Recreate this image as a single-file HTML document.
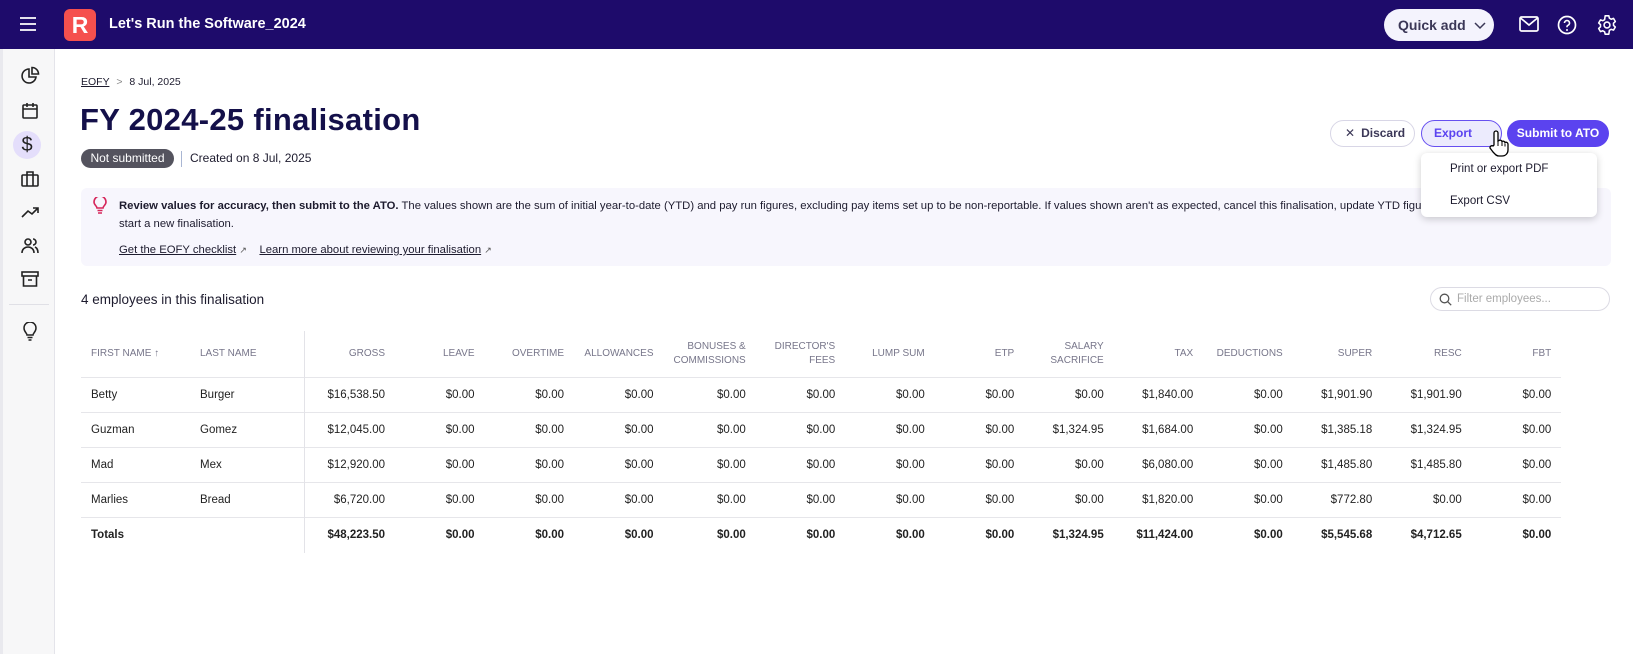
<!DOCTYPE html>
<html><head><meta charset="utf-8"><style>
*{box-sizing:border-box;margin:0;padding:0}
body{width:1633px;height:654px;overflow:hidden;background:#fff;font-family:"Liberation Sans",sans-serif;color:#1d1b2e;position:relative}
.top{position:absolute;left:0;top:0;width:1633px;height:49px;background:#1e0b6b}
.side{position:absolute;left:0;top:49px;width:55px;height:605px;background:#f7f7f8;border-right:1px solid #e4e4ea;border-left:3px solid #e9e9ee}
.abs{position:absolute}
.si{position:absolute;left:17px;width:20px;height:20px}
table{border-collapse:collapse;position:absolute;left:81px;top:331px;table-layout:fixed;font-size:11.5px}
td,th{padding:0 10px;text-align:right;white-space:nowrap}
th{font-weight:normal;color:#77768a;font-size:10px;height:46px;line-height:14px;text-transform:uppercase}
td{height:35px;border-top:1px solid #e6e6ea;color:#222}
tr.tot td{font-weight:bold;height:36px}
.l{text-align:left}
.div{border-right:1px solid #e3e3e8}
</style></head><body>
<div class="top">
 <svg class="abs" style="left:19px;top:16px" width="18" height="16"><path d="M1 2h16M1 8h16M1 14h16" stroke="#fff" stroke-width="1.8"/></svg>
 <div class="abs" style="left:64px;top:9px;width:32px;height:32px;background:#f5504e;border-radius:6px;color:#fff;font-size:23px;font-weight:bold;text-align:center;line-height:32px">R</div>
 <div class="abs" style="left:109px;top:16px;color:#fff;font-size:14.5px;font-weight:bold">Let's Run the Software_2024</div>
 <div class="abs" style="left:1384px;top:9px;width:110px;height:32px;background:#f4f3fd;border-radius:16px;font-size:14px;font-weight:bold;color:#3b3757;line-height:32px;padding-left:14px">Quick add <svg width="12" height="8" style="margin-left:4px"><path d="M1 1l5 5 5-5" stroke="#3b3757" stroke-width="1.5" fill="none"/></svg></div>
 <svg class="abs" style="left:1519px;top:16px" width="20" height="16"><rect x="1" y="1" width="18" height="14" rx="1.5" stroke="#fff" stroke-width="1.7" fill="none"/><path d="M1.5 2l8.5 7 8.5-7" stroke="#fff" stroke-width="1.7" fill="none"/></svg>
 <svg class="abs" style="left:1557px;top:15px" width="20" height="20"><circle cx="10" cy="10" r="8.5" stroke="#fff" stroke-width="1.7" fill="none"/><path d="M7.5 8a2.5 2.5 0 1 1 3.5 2.3c-.7.3-1 .8-1 1.5v.5" stroke="#fff" stroke-width="1.6" fill="none"/><circle cx="10" cy="15" r="1" fill="#fff"/></svg>
 <svg class="abs" style="left:1596px;top:14px" width="22" height="22" viewBox="0 0 24 24"><path d="M10 2h4l.6 2.6 2 1.1 2.5-.9 2 3.4-2 1.8v2.4l2 1.8-2 3.4-2.5-.9-2 1.1L14 22h-4l-.6-2.6-2-1.1-2.5.9-2-3.4 2-1.8V11.6l-2-1.8 2-3.4 2.5.9 2-1.1z" stroke="#fff" stroke-width="1.7" fill="none" stroke-linejoin="round"/><circle cx="12" cy="12" r="3.2" stroke="#fff" stroke-width="1.7" fill="none"/></svg>
</div>
<div class="side">
 <svg class="si" style="top:17px" viewBox="0 0 20 20"><path d="M9 3a7 7 0 1 0 7 8H9z" stroke="#222" stroke-width="1.6" fill="none"/><path d="M12 1.5a6.5 6.5 0 0 1 6.5 6.5H12z" stroke="#222" stroke-width="1.6" fill="none"/></svg>
 <svg class="si" style="top:52px" viewBox="0 0 20 20"><rect x="3" y="4" width="14" height="13" rx="1" stroke="#222" stroke-width="1.6" fill="none"/><path d="M3 8h14M7 2v4M13 2v4" stroke="#222" stroke-width="1.6"/></svg>
 <div class="abs" style="left:10px;top:82px;width:28px;height:28px;border-radius:14px;background:#e4defb;text-align:center;line-height:28px;font-size:20px;color:#222">$</div>
 <svg class="si" style="top:120px" viewBox="0 0 20 20"><rect x="2" y="6" width="16" height="11" rx="1" stroke="#222" stroke-width="1.6" fill="none"/><path d="M7 6V3h6v3M7 6v11M13 6v11" stroke="#222" stroke-width="1.6" fill="none"/></svg>
 <svg class="si" style="top:153px" viewBox="0 0 20 20"><path d="M2 15l6-6 4 3 6-6M13 6h5v5" stroke="#222" stroke-width="1.6" fill="none"/></svg>
 <svg class="si" style="top:187px" viewBox="0 0 20 20"><circle cx="8" cy="6" r="3" stroke="#222" stroke-width="1.6" fill="none"/><path d="M2 17c0-4 3-6 6-6s6 2 6 6M13 3a3 3 0 0 1 0 6M15 11c2 1 3 3 3 6" stroke="#222" stroke-width="1.6" fill="none"/></svg>
 <svg class="si" style="top:220px" viewBox="0 0 20 20"><rect x="2" y="3" width="16" height="4" stroke="#222" stroke-width="1.6" fill="none"/><path d="M3.5 7v10h13V7M8 11h4" stroke="#222" stroke-width="1.6" fill="none"/></svg>
 <div class="abs" style="left:6px;top:255px;width:40px;height:1px;background:#e0e0e6"></div>
 <svg class="si" style="top:273px" viewBox="0 0 20 20"><path d="M7 13c0-2-3-3-3-7a6 6 0 0 1 12 0c0 4-3 5-3 7zM7.5 15.5h5M8.5 18h3" stroke="#222" stroke-width="1.5" fill="none"/></svg>
</div>
<div class="abs" style="left:81px;top:76px;font-size:10.5px"><span style="text-decoration:underline">EOFY</span> <span style="color:#888;margin:0 4px">&gt;</span> 8 Jul, 2025</div>
<div class="abs" style="left:80px;top:102px;font-size:31px;font-weight:900;color:#14104a;letter-spacing:0.3px">FY 2024-25 finalisation</div>
<div class="abs" style="left:81px;top:149px;width:93px;height:19px;border-radius:10px;background:#54535e;color:#fff;font-size:12px;text-align:center;line-height:19px">Not submitted</div>
<div class="abs" style="left:181px;top:151px;width:1px;height:16px;background:#a9b6d3"></div>
<div class="abs" style="left:190px;top:151px;font-size:12px">Created on 8 Jul, 2025</div>
<div class="abs" style="left:1330px;top:120px;width:85px;height:27px;border:1px solid #d8d6e6;border-radius:14px;font-size:12px;font-weight:bold;color:#3b3757;line-height:25px;padding-left:14px"><span style="font-weight:normal;margin-right:6px">✕</span>Discard</div>
<div class="abs" style="left:1421px;top:120px;width:81px;height:27px;border:1px solid #6750f0;background:#ecebfd;border-radius:14px;font-size:12px;font-weight:bold;color:#5b43f0;line-height:25px;padding-left:12px">Export</div>
<div class="abs" style="left:1507px;top:120px;width:102px;height:27px;background:#5b43ef;border-radius:14px;font-size:12px;font-weight:bold;color:#fff;line-height:27px;text-align:center">Submit to ATO</div>
<div class="abs" style="left:81px;top:188px;width:1530px;height:78px;background:#f7f6fd;border-radius:6px"></div>
<svg class="abs" style="left:93px;top:197px" width="14" height="18" viewBox="0 0 14 18"><path d="M4 11c0-2-3-3-3-6a6 6 0 0 1 12 0c0 3-3 4-3 6zM4.5 13.5h5M5 16h4" stroke="#d6265b" stroke-width="1.6" fill="none"/></svg>
<div class="abs" style="left:119px;top:197px;font-size:11.3px;line-height:18px;white-space:nowrap"><b style="font-weight:600">Review values for accuracy, then submit to the ATO.</b> The values shown are the sum of initial year-to-date (YTD) and pay run figures, excluding pay items set up to be non-reportable. If values shown aren't as expected, cancel this finalisation, update YTD figures and<br>start a new finalisation.</div>
<div class="abs" style="left:119px;top:244px;font-size:11.3px;white-space:nowrap"><span style="text-decoration:underline">Get the EOFY checklist</span> <span style="font-size:9px;color:#555">↗</span>&nbsp;&nbsp;&nbsp; <span style="text-decoration:underline">Learn more about reviewing your finalisation</span> <span style="font-size:9px;color:#555">↗</span></div>
<div class="abs" style="left:1421px;top:153px;width:176px;height:64px;background:#fff;border-radius:6px;box-shadow:0 2px 8px rgba(0,0,0,.2);font-size:11.5px">
 <div class="abs" style="left:29px;top:10px">Print or export PDF</div>
 <div class="abs" style="left:29px;top:42px">Export CSV</div>
</div>
<svg class="abs" style="left:1488px;top:129px" width="22" height="28" viewBox="0 0 22 28"><path d="M6 16V4a2 2 0 0 1 4 0v8l1-.5a2 2 0 0 1 3 1 2 2 0 0 1 3 1 2 2 0 0 1 3 1.5V21c0 3-2 6-6 6h-3c-3 0-4-2-6-4l-3-4a2 2 0 0 1 3-2z" fill="#fff" stroke="#000" stroke-width="1.3"/><path d="M10 12v5M14 13v4M17 14.5v3" stroke="#000" stroke-width="1"/></svg>
<div class="abs" style="left:81px;top:292px;font-size:13.5px;font-weight:500">4 employees in this finalisation</div>
<div class="abs" style="left:1430px;top:287px;width:180px;height:24px;border:1px solid #dcdbe4;border-radius:12px;font-size:11.5px;color:#aaa;line-height:22px;padding-left:26px">Filter employees...</div>
<svg class="abs" style="left:1439px;top:293px" width="13" height="13"><circle cx="5.5" cy="5.5" r="4.3" stroke="#555" stroke-width="1.3" fill="none"/><path d="M8.7 8.7l3.5 3.5" stroke="#555" stroke-width="1.3"/></svg>
<table>
<colgroup><col style="width:109px"><col style="width:114px"><col style="width:91px"><col span="13" style="width:89.5px"></colgroup>
<tr><th class="l">First name ↑</th><th class="l div">Last name</th><th>Gross</th><th>Leave</th><th>Overtime</th><th>Allowances</th><th>Bonuses &amp;<br>Commissions</th><th>Director's<br>fees</th><th>Lump sum</th><th>ETP</th><th>Salary<br>sacrifice</th><th>Tax</th><th>Deductions</th><th>Super</th><th>RESC</th><th>FBT</th></tr>
<tr><td class="l">Betty</td><td class="l div">Burger</td><td>$16,538.50</td><td>$0.00</td><td>$0.00</td><td>$0.00</td><td>$0.00</td><td>$0.00</td><td>$0.00</td><td>$0.00</td><td>$0.00</td><td>$1,840.00</td><td>$0.00</td><td>$1,901.90</td><td>$1,901.90</td><td>$0.00</td></tr>
<tr><td class="l">Guzman</td><td class="l div">Gomez</td><td>$12,045.00</td><td>$0.00</td><td>$0.00</td><td>$0.00</td><td>$0.00</td><td>$0.00</td><td>$0.00</td><td>$0.00</td><td>$1,324.95</td><td>$1,684.00</td><td>$0.00</td><td>$1,385.18</td><td>$1,324.95</td><td>$0.00</td></tr>
<tr><td class="l">Mad</td><td class="l div">Mex</td><td>$12,920.00</td><td>$0.00</td><td>$0.00</td><td>$0.00</td><td>$0.00</td><td>$0.00</td><td>$0.00</td><td>$0.00</td><td>$0.00</td><td>$6,080.00</td><td>$0.00</td><td>$1,485.80</td><td>$1,485.80</td><td>$0.00</td></tr>
<tr><td class="l">Marlies</td><td class="l div">Bread</td><td>$6,720.00</td><td>$0.00</td><td>$0.00</td><td>$0.00</td><td>$0.00</td><td>$0.00</td><td>$0.00</td><td>$0.00</td><td>$0.00</td><td>$1,820.00</td><td>$0.00</td><td>$772.80</td><td>$0.00</td><td>$0.00</td></tr>
<tr class="tot"><td class="l">Totals</td><td class="l div"></td><td>$48,223.50</td><td>$0.00</td><td>$0.00</td><td>$0.00</td><td>$0.00</td><td>$0.00</td><td>$0.00</td><td>$0.00</td><td>$1,324.95</td><td>$11,424.00</td><td>$0.00</td><td>$5,545.68</td><td>$4,712.65</td><td>$0.00</td></tr>
</table>
</body></html>
